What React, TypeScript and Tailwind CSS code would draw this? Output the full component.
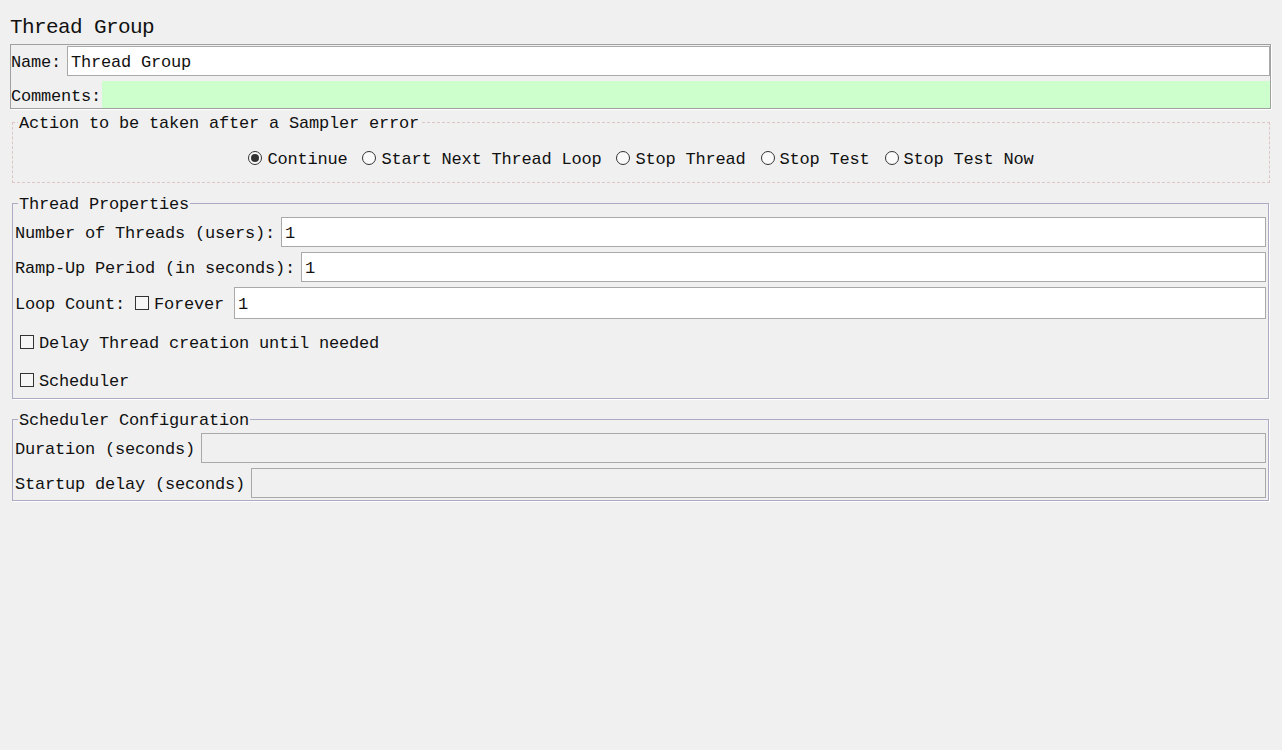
import React from "react";

const mono = "font-['Liberation_Mono','DejaVu_Sans_Mono',monospace]";

// text sits ~2px higher than the reference in its box, so nudge it with padding
function T({ children, className = "" }: { children: React.ReactNode; className?: string }) {
  return <span className={"pt-[4px] " + className}>{children}</span>;
}

function Radio({ label, checked }: { label: string; checked?: boolean }) {
  return (
    <label className="flex items-center">
      <span className="w-[14px] h-[14px] rounded-full border border-[#333] bg-[#fafafa] flex items-center justify-center mr-[5px]">
        {checked && <span className="w-[8px] h-[8px] rounded-full bg-[#333]" />}
      </span>
      <T>{label}</T>
    </label>
  );
}

function Check() {
  return <span className="inline-block w-[14px] h-[14px] border border-[#333] bg-[#f6f6f6] shrink-0" />;
}

function Field({ value, disabled }: { value?: string; disabled?: boolean }) {
  return (
    <div
      className={
        "flex-1 h-full border border-[#a9a9a9] flex items-center pl-[3px] " +
        (disabled ? "bg-[#f0f0f0]" : "bg-white")
      }
    >
      {value && <T>{value}</T>}
    </div>
  );
}

function Legend({ children, padded }: { children: React.ReactNode; padded?: boolean }) {
  return (
    <legend className={(padded ? "ml-[3px]" : "ml-[5px]") + " px-[1px] pt-[4px] leading-[16px]"}>{children}</legend>
  );
}

export default function App() {
  return (
    <div className={`${mono} min-h-screen bg-[#f0f0f0] text-[#111] text-[17px] tracking-[-0.2px] leading-[20px]`}>
      {/* title */}
      <div className="h-[44px] pt-[16px] pl-[10px]">
        <h1 className="text-[21px] tracking-[-0.6px] leading-[24px]">Thread Group</h1>
      </div>

      {/* name / comments */}
      <div className="ml-[10px] mr-[11px] border border-[#a0a0a0] shadow-[1px_1px_0_#fff]">
        <div className="flex items-center h-[30px] mt-[1px]">
          <T className="mr-[6px]">Name:</T>
          <Field value="Thread Group" />
        </div>
        <div className="flex items-center h-[27px] mt-[5px]">
          <T className="mr-[1px]">Comments:</T>
          <div className="flex-1 h-full bg-[#ccffcc]" />
        </div>
      </div>

      {/* sampler error action */}
      <fieldset className="mt-[3px] ml-[12px] mr-[12px] border border-dashed border-[#dcc6c6]">
        <Legend>Action to be taken after a Sampler error</Legend>
        <div className="h-[50px] pt-[2px] flex items-center justify-center gap-[15px]">
          <Radio label="Continue" checked />
          <Radio label="Start Next Thread Loop" />
          <Radio label="Stop Thread" />
          <Radio label="Stop Test" />
          <Radio label="Stop Test Now" />
        </div>
      </fieldset>

      {/* thread properties */}
      <fieldset className="mt-[10px] ml-[12px] mr-[13px] border border-[#ababc4] shadow-[1px_1px_0_#fff] pl-[2px] pr-[2px]">
        <Legend padded>Thread Properties</Legend>
        <div className="flex flex-col">
          <div className="flex items-center h-[30px] mt-[4px]">
            <T className="mr-[6px]">Number of Threads (users):</T>
            <Field value="1" />
          </div>
          <div className="flex items-center h-[30px] mt-[5px]">
            <T className="mr-[6px]">Ramp-Up Period (in seconds):</T>
            <Field value="1" />
          </div>
          <div className="flex items-center h-[32px] mt-[5px]">
            <T className="mr-[10px]">Loop Count:</T>
            <Check />
            <T className="ml-[5px] mr-[10px]">Forever</T>
            <Field value="1" />
          </div>
          <div className="flex items-center h-[38px] mt-[4px] pl-[5px]">
            <Check />
            <T className="ml-[5px]">Delay Thread creation until needed</T>
          </div>
          <div className="flex items-center h-[37px] pl-[5px]">
            <Check />
            <T className="ml-[5px]">Scheduler</T>
          </div>
        </div>
      </fieldset>

      {/* scheduler configuration */}
      <fieldset className="mt-[10px] ml-[12px] mr-[13px] border border-[#ababc4] shadow-[1px_1px_0_#fff] pl-[2px] pr-[2px] pb-[2px]">
        <Legend padded>Scheduler Configuration</Legend>
        <div className="flex items-center h-[30px] mt-[4px]">
          <T className="mr-[6px]">Duration (seconds)</T>
          <Field disabled />
        </div>
        <div className="flex items-center h-[30px] mt-[5px]">
          <T className="mr-[6px]">Startup delay (seconds)</T>
          <Field disabled />
        </div>
      </fieldset>
    </div>
  );
}
